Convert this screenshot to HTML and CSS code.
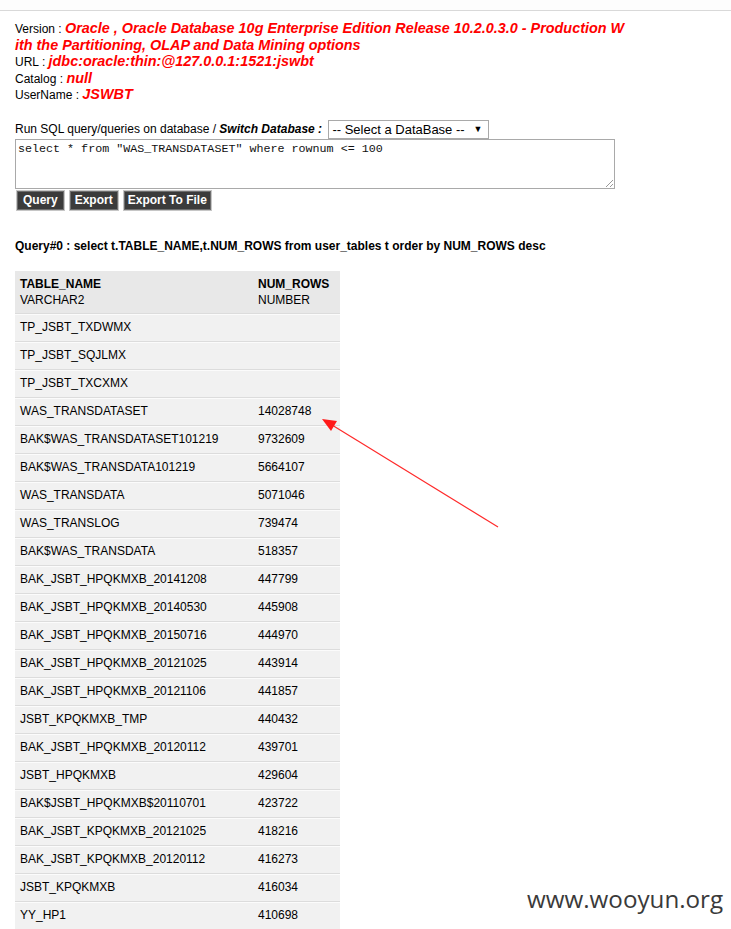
FILE: index.html
```html
<!DOCTYPE html>
<html>
<head>
<meta charset="utf-8">
<title>SQL Query</title>
<link rel="stylesheet" href="styles.css">
</head>
<body>
<div class="topbar"></div>
<div class="content">
  <div class="info">
    <div class="line">Version : <span class="val">Oracle , Oracle Database 10g Enterprise Edition Release 10.2.0.3.0 - Production With the Partitioning, OLAP and Data Mining options</span></div>
    <div class="line">URL : <span class="val">jdbc:oracle:thin:@127.0.0.1:1521:jswbt</span></div>
    <div class="line">Catalog : <span class="val">null</span></div>
    <div class="line">UserName : <span class="val">JSWBT</span></div>
  </div>

  <form class="queryform">
    <div class="runline">Run SQL query/queries on database / <b><i>Switch Database :</i></b> <span class="select">-- Select a DataBase --<span class="caret">&#9660;</span></span></div>
    <div class="textarea">select * from "WAS_TRANSDATASET" where rownum &lt;= 100<span class="grip"></span></div>
    <div class="buttons">
      <span class="btn">Query</span>
      <span class="btn">Export</span>
      <span class="btn">Export To File</span>
    </div>
  </form>

  <div class="qtitle">Query#0 : select t.TABLE_NAME,t.NUM_ROWS from user_tables t order by NUM_ROWS desc</div>

  <table class="result">
    <thead>
      <tr><th><b>TABLE_NAME</b><br>VARCHAR2</th><th><b>NUM_ROWS</b><br>NUMBER</th></tr>
    </thead>
    <tbody>
      <tr><td>TP_JSBT_TXDWMX</td><td></td></tr>
      <tr><td>TP_JSBT_SQJLMX</td><td></td></tr>
      <tr><td>TP_JSBT_TXCXMX</td><td></td></tr>
      <tr><td>WAS_TRANSDATASET</td><td>14028748</td></tr>
      <tr><td>BAK$WAS_TRANSDATASET101219</td><td>9732609</td></tr>
      <tr><td>BAK$WAS_TRANSDATA101219</td><td>5664107</td></tr>
      <tr><td>WAS_TRANSDATA</td><td>5071046</td></tr>
      <tr><td>WAS_TRANSLOG</td><td>739474</td></tr>
      <tr><td>BAK$WAS_TRANSDATA</td><td>518357</td></tr>
      <tr><td>BAK_JSBT_HPQKMXB_20141208</td><td>447799</td></tr>
      <tr><td>BAK_JSBT_HPQKMXB_20140530</td><td>445908</td></tr>
      <tr><td>BAK_JSBT_HPQKMXB_20150716</td><td>444970</td></tr>
      <tr><td>BAK_JSBT_HPQKMXB_20121025</td><td>443914</td></tr>
      <tr><td>BAK_JSBT_HPQKMXB_20121106</td><td>441857</td></tr>
      <tr><td>JSBT_KPQKMXB_TMP</td><td>440432</td></tr>
      <tr><td>BAK_JSBT_HPQKMXB_20120112</td><td>439701</td></tr>
      <tr><td>JSBT_HPQKMXB</td><td>429604</td></tr>
      <tr><td>BAK$JSBT_HPQKMXB$20110701</td><td>423722</td></tr>
      <tr><td>BAK_JSBT_KPQKMXB_20121025</td><td>418216</td></tr>
      <tr><td>BAK_JSBT_KPQKMXB_20120112</td><td>416273</td></tr>
      <tr><td>JSBT_KPQKMXB</td><td>416034</td></tr>
      <tr><td>YY_HP1</td><td>410698</td></tr>
      <tr><td>&nbsp;</td><td></td></tr>
    </tbody>
  </table>
</div>

<svg class="arrow" width="731" height="929" viewBox="0 0 731 929">
  <line x1="498" y1="527" x2="332" y2="425" stroke="#ff2a2a" stroke-width="1.2"/>
  <polygon points="322,419 337,421 331,431" fill="#ff1a1a"/>
</svg>

<div class="watermark">www.wooyun.org</div>
</body>
</html>
```

FILE: styles.css
```css
html, body {
  margin: 0;
  padding: 0;
  background: #fff;
}
body {
  font-family: "Liberation Sans", Arial, sans-serif;
  font-size: 12px;
  color: #000;
  width: 731px;
  height: 929px;
  overflow: hidden;
  position: relative;
}
.topbar {
  height: 10px;
  border-bottom: 1px solid #d9d9d9;
  background: #fdfdfd;
}
.content {
  padding: 10px 0 0 15px;
}
.info {
  width: 610px;
  word-break: break-all;
}
.line {
  line-height: 16.5px;
}
.val {
  color: #ff0000;
  font-weight: bold;
  font-style: italic;
  font-size: 14.4px;
  line-height: 14px;
}
.queryform {
  margin: 16px 0 0 0;
}
.runline {
  height: 19px;
  line-height: 19px;
}
.select {
  display: inline-flex;
  vertical-align: top;
  align-items: center;
  justify-content: space-between;
  box-sizing: border-box;
  width: 161px;
  height: 19px;
  border: 1px solid #a9a9a9;
  padding: 0 6px 0 3px;
  font-size: 13px;
  background: #fff;
  margin-left: 3px;
}
.caret {
  font-size: 9px;
}
.textarea {
  position: relative;
  box-sizing: border-box;
  width: 600px;
  height: 50px;
  border: 1px solid #a9a9a9;
  margin-top: 0;
  padding: 2px 2px;
  font-family: "Liberation Mono", "Courier New", monospace;
  font-size: 11.7px;
  line-height: 14px;
  color: #111;
  white-space: pre;
}
.grip {
  position: absolute;
  right: 1px;
  bottom: 1px;
  width: 7px;
  height: 7px;
  background: linear-gradient(135deg, transparent 45%, #999 45%, #999 52%, transparent 52%, transparent 72%, #999 72%, #999 79%, transparent 79%);
}
.buttons {
  display: flex;
  gap: 4px;
  margin-top: 1px;
  padding-left: 1px;
}
.btn {
  box-sizing: border-box;
  height: 21px;
  line-height: 19px;
  padding: 0 5px;
  background: #3b3b3b;
  color: #fff;
  font-weight: bold;
  font-size: 12px;
  border: 1px solid #c6c6c6;
  outline: 1px solid #6d6d6d;
  outline-offset: -2px;
}
.btn:first-child {
  padding: 0 6px;
}
.btn:last-child {
  padding: 0 4px;
}
.qtitle {
  margin-top: 28px;
  font-weight: bold;
  font-size: 12px;
  line-height: 14px;
}
.result {
  margin-top: 18px;
  border-collapse: collapse;
  width: 325px;
  font-size: 12px;
}
.result th {
  background: #e8e8e8;
  text-align: left;
  font-weight: normal;
  padding: 5px;
  line-height: 16px;
  height: 32px;
  vertical-align: middle;
}
.result th:first-child {
  width: 228px;
}
.result td {
  background: #f1f1f1;
  height: 27px;
  padding: 0 5px;
  border-top: 1px solid #dcdcdc;
  box-shadow: inset 0 1px 0 #fbfbfb;
  vertical-align: middle;
  line-height: 14px;
}
.arrow {
  position: absolute;
  left: 0;
  top: 0;
  pointer-events: none;
}
.watermark {
  position: absolute;
  left: 527px;
  top: 882px;
  font-family: "Open Sans", "Liberation Sans", sans-serif;
  font-size: 24.2px;
  color: #3a3a3a;
}
```
